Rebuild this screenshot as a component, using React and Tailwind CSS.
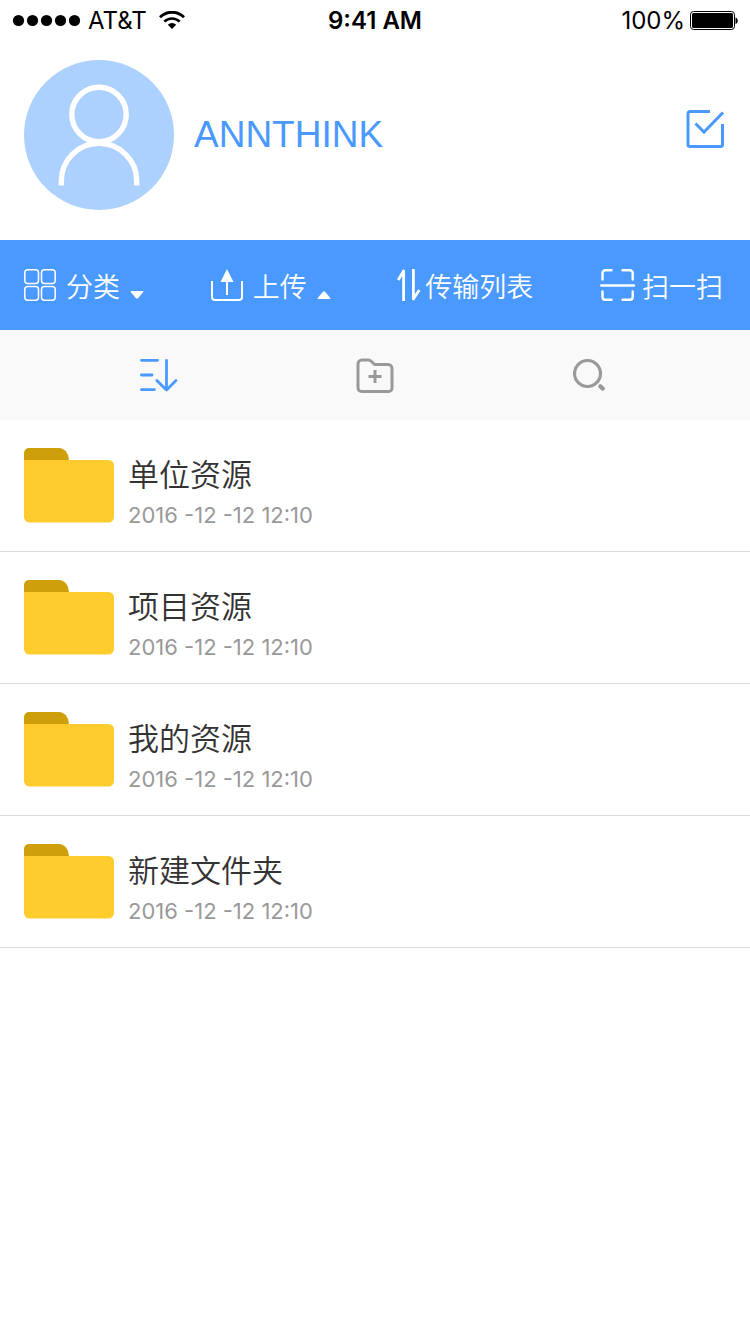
const files = [
  { id: 1, name: "单位资源", date: "2016 -12 -12 12:10" },
  { id: 2, name: "项目资源", date: "2016 -12 -12 12:10" },
  { id: 3, name: "我的资源", date: "2016 -12 -12 12:10" },
  { id: 4, name: "新建文件夹", date: "2016 -12 -12 12:10" },
];

const StatusBar = () => (
  <div className="grid grid-cols-3 items-center h-10 pt-0.5 px-3 text-2xl text-black">
    <div className="flex items-center">
      <svg width="70" height="14" viewBox="0 0 70 14" fill="currentColor">
        <circle cx="6.5" cy="6.5" r="5.6" />
        <circle cx="20.5" cy="6.5" r="5.6" />
        <circle cx="34.5" cy="6.5" r="5.6" />
        <circle cx="48.5" cy="6.5" r="5.6" />
        <circle cx="62.5" cy="6.5" r="5.6" />
      </svg>
      <span className="ml-1.5">AT&amp;T</span>
      <svg className="ml-3" width="26" height="20" viewBox="0 0 26 20" fill="none" stroke="currentColor">
        <path d="M1 6.200a17 17 0 0 1 24 0" strokeWidth="2.8" />
        <path d="M5.3 10.600a11 11 0 0 1 15.4 0" strokeWidth="2.6" />
        <path d="M13 18l-4.2-4.3a6 6 0 0 1 8.4 0z" fill="currentColor" stroke="none" />
      </svg>
    </div>
    <div className="text-center font-semibold">9:41 AM</div>
    <div className="flex items-center justify-end gap-1">
      <span>100%</span>
      <svg width="49" height="20" viewBox="0 0 49 20">
        <rect x="1.500" y="0.5" width="44" height="18" rx="3" fill="none" stroke="currentColor" />
        <rect x="3" y="2" width="41" height="15" rx="1.5" fill="currentColor" />
        <path d="M46.500 6.500c3 1 3 5.500 0 6.500z" fill="currentColor" />
      </svg>
    </div>
  </div>
);

const Profile = () => (
  <header className="flex items-center px-6 pt-5 pb-[30px] text-[#4a99ff]">
    <svg className="shrink-0" width="150" height="150" viewBox="0 0 150 150" fill="none">
      <circle cx="75" cy="75" r="75" fill="#add1ff" />
      <g stroke="#fff" strokeWidth="5.4">
        <circle cx="75" cy="54.5" r="27.2" />
        <path d="M37.3 125.5v-4.500a37.700 37.700 0 0 1 75.400 0v4.500" />
      </g>
    </svg>
    <h1 className="ml-5 text-[37px] font-['Liberation_Sans',sans-serif]">ANNTHINK</h1>
    <button type="button" aria-label="选择" className="ml-auto mb-3">
      <svg width="40" height="40" viewBox="0 0 40 40" fill="none" stroke="currentColor" strokeWidth="3">
        <path d="M24 2.500H4a2 2 0 0 0-2 2V35.500a2 2 0 0 0 2 2H34.500a2 2 0 0 0 2-2V15" />
        <path d="M9.500 14.500l8.500 8.500L37 3.500" />
      </svg>
    </button>
  </header>
);

const GridIcon = () => (
  <svg width="32" height="32" viewBox="0 0 32 32" fill="none" stroke="currentColor" strokeWidth="1.5">
    <rect x="0.8" y="0.8" width="13.700" height="13.700" rx="3" />
    <rect x="17.500" y="0.8" width="13.700" height="13.700" rx="3" />
    <rect x="0.8" y="17.500" width="13.700" height="13.700" rx="3" />
    <rect x="17.500" y="17.500" width="13.700" height="13.700" rx="3" />
  </svg>
);

const UploadIcon = () => (
  <svg width="32" height="32" viewBox="0 0 32 32" fill="none" stroke="currentColor" strokeWidth="2">
    <path d="M1 12v16a3 3 0 0 0 3 3h24a3 3 0 0 0 3-3V12" />
    <path d="M16 10v16" />
    <path d="M16 0l6.500 13h-13z" fill="currentColor" stroke="none" />
  </svg>
);

const TransferIcon = () => (
  <svg width="24" height="32" viewBox="0 0 24 32" fill="none" stroke="currentColor" strokeWidth="2.800" strokeLinejoin="round">
    <path d="M1.200 11L6.600 2V32" />
    <path d="M16.400 0V30L22.300 21" />
  </svg>
);

const ScanIcon = () => (
  <svg width="36" height="32" viewBox="0 0 36 32" fill="none" stroke="currentColor" strokeWidth="2.400" strokeLinecap="round">
    <path d="M2.500 10.500V4a2.700 2.700 0 0 1 2.700-2.700H11.500" />
    <path d="M22.500 1.300H30a2.700 2.700 0 0 1 2.700 2.700V10.500" />
    <path d="M2.500 22.500V28a2.700 2.700 0 0 0 2.700 2.700H11.500" />
    <path d="M22.500 30.700H30a2.700 2.700 0 0 0 2.700-2.700V22.500" />
    <path d="M1.200 16.500H34" />
  </svg>
);

const Toolbar = () => (
  <nav className="flex items-center justify-between h-[90px] pl-6 pr-[27px] bg-[#4a99ff] text-white text-[27px] font-[350] whitespace-nowrap">
    <button type="button" className="flex items-center gap-2.5">
      <GridIcon />
      <span className="pt-1.5">分类</span>
      <svg className="mt-5" width="14" height="8" viewBox="0 0 14 8" fill="currentColor">
        <path d="M1.200 0h11.600q1.200 0 .3 1.200L8 7.200q-1 .9-2 0L.9 1.200Q0 0 1.200 0z" />
      </svg>
    </button>
    <button type="button" className="flex items-center gap-2.5">
      <UploadIcon />
      <span className="pt-1.5">上传</span>
      <svg className="mt-5" width="14" height="8" viewBox="0 0 14 8" fill="currentColor">
        <path d="M1.200 8h11.600q1.200 0 .3-1.200L8 .8q-1-.9-2 0L.9 6.800Q0 8 1.200 8z" />
      </svg>
    </button>
    <button type="button" className="flex items-center gap-1">
      <TransferIcon />
      <span className="pt-1.5">传输列表</span>
    </button>
    <button type="button" className="flex items-center gap-1.5">
      <ScanIcon />
      <span className="pt-1.5">扫一扫</span>
    </button>
  </nav>
);

const ActionBar = () => (
  <div className="grid grid-cols-3 justify-items-center items-center h-[90px] px-[51px] bg-[#f9f9f9] text-[#999999]">
    <button type="button" aria-label="排序" className="text-[#4a99ff]">
      <svg width="38" height="36" viewBox="0 0 38 36" fill="none" stroke="currentColor" strokeWidth="2.800" strokeLinecap="round" strokeLinejoin="round">
        <path d="M1.400 3.300H17.500M1.400 18H12M1.400 32.600H14.500" />
        <path d="M26.500 3.300V33M16.800 23.500L26.500 33l9.500-9.500" />
      </svg>
    </button>
    <button type="button" aria-label="新建文件夹">
      <svg width="38" height="36" viewBox="0 0 38 36" fill="none" stroke="currentColor" strokeWidth="3" strokeLinejoin="round">
        <path d="M2 31V7a4 4 0 0 1 4-4h6q2 0 3.500 1.500L18.500 7.500H32a4 4 0 0 1 4 4V31a3.500 3.500 0 0 1-3.500 3.500h-27A3.500 3.500 0 0 1 2 31z" />
        <path d="M12.500 19.500h13M19 13v13" />
      </svg>
    </button>
    <button type="button" aria-label="搜索">
      <svg width="36" height="36" viewBox="0 0 36 36" fill="none" stroke="currentColor">
        <circle cx="14.500" cy="16.500" r="13" strokeWidth="3.200" />
        <path d="M27.300 29.300l2.500 2.300" strokeWidth="4.200" strokeLinecap="round" />
      </svg>
    </button>
  </div>
);

const FolderIcon = () => (
  <svg className="shrink-0" width="90" height="75" viewBox="0 0 90 75">
    <path d="M0 14V5a5 5 0 0 1 5-5h30a10 12 0 0 1 10 12v2z" fill="#cf9f0a" />
    <path d="M0 12h84.500a5.500 5.500 0 0 1 5.500 5.500v51.500a5.500 5.500 0 0 1-5.500 5.500h-79A5.500 5.500 0 0 1 0 69z" fill="#ffcc2e" />
  </svg>
);

const FileList = () => (
  <ul>
    {files.map((file) => (
      <li key={file.id} className="border-b border-[#dcdcdc]">
        <a href="#" className="flex items-start px-6 pt-7 pb-4">
          <FolderIcon />
          <div className="ml-3.5 pt-[7px]">
            <h2 className="text-[31px] leading-10 font-[350] text-[#333333]">{file.name}</h2>
            <p className="text-[22px] leading-10 text-[#999999]">{file.date}</p>
          </div>
        </a>
      </li>
    ))}
  </ul>
);

const App = () => {
  return (
    <div className="min-h-screen bg-white font-['Inter','Noto_Sans_CJK_SC',sans-serif]">
      <StatusBar />
      <Profile />
      <Toolbar />
      <ActionBar />
      <FileList />
    </div>
  );
};

export default App;
